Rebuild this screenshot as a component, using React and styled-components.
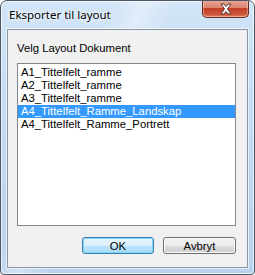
import React, { useState } from "react";
import styled, { createGlobalStyle } from "styled-components";

const GlobalStyle = createGlobalStyle`
  html, body {
    margin: 0;
    padding: 0;
    background: #ffffff;
  }
  * {
    box-sizing: border-box;
  }
`;

const Window = styled.div`
  width: 255px;
  height: 275px;
  display: flex;
  flex-direction: column;
  border: 1px solid #4a5462;
  border-radius: 7px 7px 4px 4px;
  background:
    linear-gradient(115deg, rgba(255, 255, 255, 0) 30%, rgba(255, 255, 255, 0.35) 38%, rgba(255, 255, 255, 0) 46%),
    linear-gradient(to bottom, #d3e5f7 0%, #c3dbf3 40%, #b9d3ee 100%);
  box-shadow: inset 0 0 0 1px rgba(255, 255, 255, 0.7);
  overflow: hidden;
`;

const TitleBar = styled.div`
  height: 28px;
  display: flex;
  align-items: flex-start;
  justify-content: space-between;
  padding-left: 8px;
`;

const Title = styled.span`
  margin-top: 7px;
  font-family: "Noto Sans", "Liberation Sans", sans-serif;
  font-size: 11.5px;
  line-height: 14px;
  color: #000;
  text-shadow: 0 0 6px #ffffff, 0 0 3px #ffffff;
`;

const CloseButton = styled.div`
  width: 47px;
  height: 18px;
  margin-right: 5px;
  margin-top: -1px;
  display: flex;
  align-items: center;
  justify-content: center;
  border: 1px solid #6b2a1e;
  border-top: none;
  border-radius: 0 0 5px 5px;
  background: linear-gradient(to bottom, #eaa898 0%, #dc8470 45%, #c43f28 50%, #cc563a 85%, #e08a66 100%);
  box-shadow: inset 0 0 0 1px rgba(255, 255, 255, 0.35);
`;

const Client = styled.div`
  flex: 1;
  margin: 0 6px 6px 6px;
  display: flex;
  flex-direction: column;
  border: 1px solid #8a97a6;
  background: #f0f0f0;
  padding: 12px 11px 13px 9px;
  box-shadow: 0 0 0 1px rgba(255, 255, 255, 0.6);
`;

const Label = styled.div`
  font-family: "Liberation Sans", sans-serif;
  font-size: 11.3px;
  line-height: 13px;
  color: #000;
  margin-bottom: 8px;
`;

const ListBox = styled.div`
  height: 163px;
  border: 1px solid #828790;
  background: #fff;
  padding: 2px 0 0 0;
`;

const Item = styled.div`
  height: 13px;
  line-height: 13px;
  padding-left: 3px;
  font-family: "Liberation Sans", sans-serif;
  font-size: 11.3px;
  white-space: nowrap;
  color: ${(p) => (p.$selected ? "#fff" : "#000")};
  background: ${(p) => (p.$selected ? "#3399ff" : "transparent")};
  cursor: default;
`;

const ButtonRow = styled.div`
  display: flex;
  justify-content: flex-end;
  gap: 9px;
  margin-top: 11px;
`;

const Button = styled.div`
  width: ${(p) => (p.$wide ? 72 : 73)}px;
  height: 17px;
  display: flex;
  align-items: center;
  justify-content: center;
  font-family: "Liberation Sans", sans-serif;
  font-size: 11.3px;
  color: #000;
  border-radius: 3px;
  border: 1px solid ${(p) => (p.$default ? "#3c7fb1" : "#707070")};
  background: ${(p) =>
    p.$default
      ? "linear-gradient(to bottom, #eaf6fd 0%, #d9f0fc 50%, #bee6fd 50%, #a7d9f5 100%)"
      : "linear-gradient(to bottom, #f2f2f2 0%, #ebebeb 50%, #dddddd 50%, #cfcfcf 100%)"};
  box-shadow: inset 0 0 0 1px ${(p) => (p.$default ? "#7fd6f6" : "#fcfcfc")};
`;

const items = [
  "A1_Tittelfelt_ramme",
  "A2_Tittelfelt_ramme",
  "A3_Tittelfelt_ramme",
  "A4_Tittelfelt_Ramme_Landskap",
  "A4_Tittelfelt_Ramme_Portrett",
];

function CloseGlyph() {
  return (
    <svg width="14" height="12" viewBox="0 0 14 12">
      <path
        d="M2 1 L5 1 L7 3.5 L9 1 L12 1 L8.5 6 L12 11 L9 11 L7 8.5 L5 11 L2 11 L5.5 6 Z"
        fill="#ffffff"
        stroke="#4a2a24"
        strokeWidth="0.9"
        strokeLinejoin="round"
      />
    </svg>
  );
}

export default function App() {
  const [selected, setSelected] = useState(3);

  return (
    <>
      <GlobalStyle />
      <Window>
        <TitleBar>
          <Title>Eksporter til layout</Title>
          <CloseButton>
            <CloseGlyph />
          </CloseButton>
        </TitleBar>
        <Client>
          <Label>Velg Layout Dokument</Label>
          <ListBox>
            {items.map((name, i) => (
              <Item key={name} $selected={i === selected} onClick={() => setSelected(i)}>
                {name}
              </Item>
            ))}
          </ListBox>
          <ButtonRow>
            <Button $default $wide>OK</Button>
            <Button>Avbryt</Button>
          </ButtonRow>
        </Client>
      </Window>
    </>
  );
}
